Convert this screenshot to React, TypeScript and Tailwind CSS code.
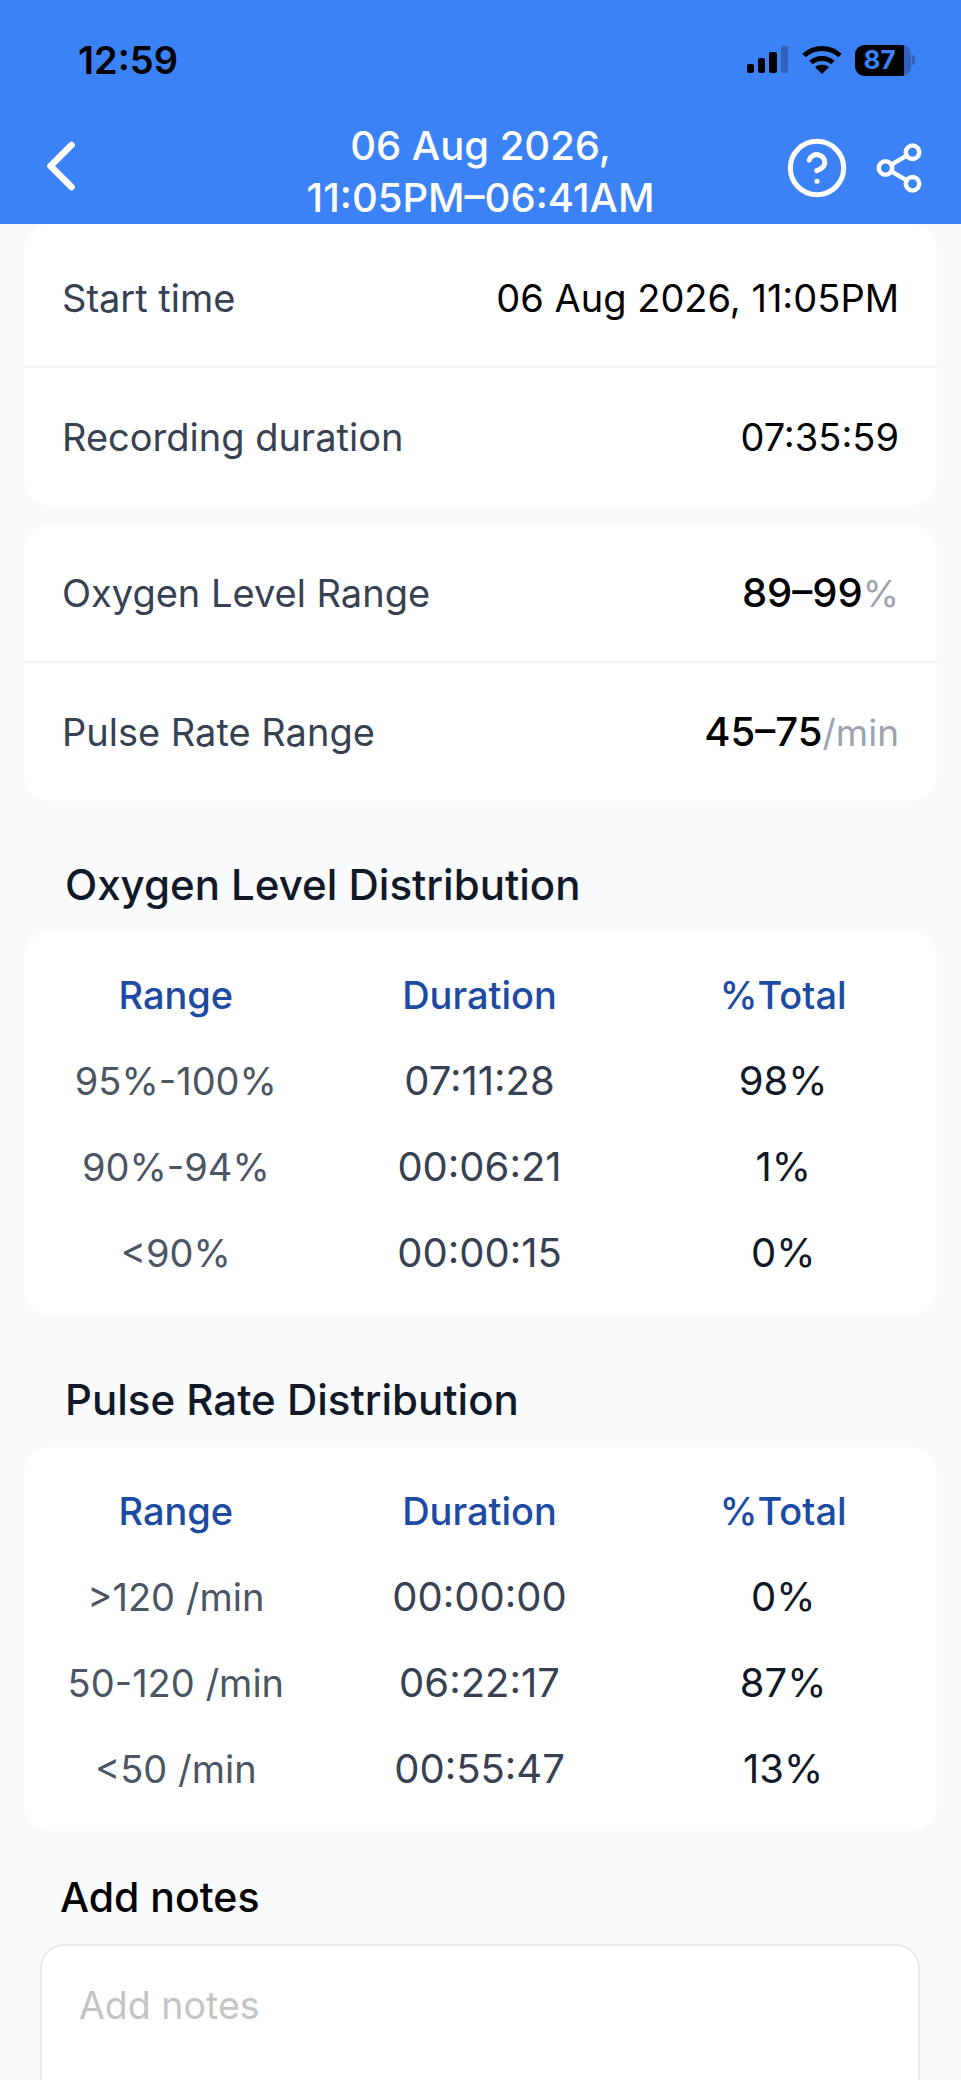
import { ChevronLeft, CircleHelp, Share2 } from 'lucide-react';

const oxygenRows = [
  ['95%-100%', '07:11:28', '98%'],
  ['90%-94%', '00:06:21', '1%'],
  ['<90%', '00:00:15', '0%'],
];

const pulseRows = [
  ['>120 /min', '00:00:00', '0%'],
  ['50-120 /min', '06:22:17', '87%'],
  ['<50 /min', '00:55:47', '13%'],
];

function StatusIcons() {
  return (
    <div className="flex items-center">
      <svg width="44" height="28" viewBox="0 0 44 28" fill="#000">
        <rect x="1" y="18" width="7" height="9" rx="2" />
        <rect x="12" y="12" width="7" height="15" rx="2" />
        <rect x="23" y="6" width="8" height="21" rx="2" />
        <rect x="35" y="0" width="7" height="27" rx="2" fill="#2f62b8" />
      </svg>
      <svg className="ml-[11px]" width="42" height="30" viewBox="0 0 42 30" fill="none" stroke="#000" strokeWidth="5">
        <path d="M3 10.5C13 1 29 1 39 10.5" />
        <path d="M10 17.5C16 12 26 12 32 17.5" />
        <path d="M21 29l-7-7c4-3 10-3 14 0z" fill="#000" stroke="none" />
      </svg>
      <div className="ml-[12px] flex items-center">
        <div className="flex h-[31px] w-[56px] overflow-hidden rounded-[9px] bg-[#2f62b8]">
          <div className="flex w-[49px] items-center justify-center rounded-l-[9px] bg-black text-[26px] font-bold leading-none text-[#3b82f6]">
            87
          </div>
        </div>
        <div className="ml-[1px] h-[10px] w-[3px] rounded-r-full bg-[#2f62b8]" />
      </div>
    </div>
  );
}

function InfoRow({ label, children, divider }: { label: string; children: React.ReactNode; divider?: boolean }) {
  return (
    <div className={`flex h-[138px] items-center justify-between px-[38px] ${divider ? 'border-b-2 border-[#f3f4f6]' : ''}`}>
      <span className="text-[#374151]">{label}</span>
      <span className="text-black">{children}</span>
    </div>
  );
}

function DistributionTable({ rows }: { rows: string[][] }) {
  return (
    <div className="rounded-[26px] bg-white pt-[21px] pb-[19px] pr-[2px] text-center text-[40px]">
      <div className="grid h-[86px] grid-cols-3 items-center font-[450] text-[#1d4ba3]">
        <span className="text-[38px]">Range</span>
        <span className="text-[38px]">Duration</span>
        <span className="text-[38px]">%Total</span>
      </div>
      {rows.map(row => (
        <div key={row[0]} className="grid h-[86px] grid-cols-3 items-center">
          <span className="text-[38px] text-[#4b5563]">{row[0]}</span>
          <span className="text-[#374151]">{row[1]}</span>
          <span className="text-[#111827]">{row[2]}</span>
        </div>
      ))}
    </div>
  );
}

export default function App() {
  return (
    <div className="h-[2080px] w-[961px] overflow-hidden bg-[#f9fafb] font-['Inter',sans-serif] text-[38px] leading-none">
      <header className="h-[224px] bg-[#3b82f6]">
        <div className="flex h-[120px] items-center justify-between pl-[78px] pr-[46px]">
          <span className="text-[38px] font-semibold text-black">12:59</span>
          <StatusIcons />
        </div>
        <div className="grid h-[104px] grid-cols-[1fr_auto_1fr] items-start text-white">
          <div className="pl-[19px] pt-[4px]">
            <ChevronLeft size={84} strokeWidth={1.9} />
          </div>
          <div className="text-center text-[40px] font-[450] leading-[52px]">
            06 Aug 2026,
            <br />
            11:05PM–06:41AM
          </div>
          <div className="flex justify-end pr-[35px] pt-[16px]">
            <CircleHelp size={64} strokeWidth={1.9} />
            <Share2 size={54} strokeWidth={2} className="ml-[23px] mt-[5px]" />
          </div>
        </div>
      </header>

      <main className="px-[24px]">
        <section className="rounded-[26px] bg-white pt-[6px]">
          <InfoRow label="Start time" divider>
            06 Aug 2026, 11:05PM
          </InfoRow>
          <InfoRow label="Recording duration">07:35:59</InfoRow>
        </section>

        <section className="mt-[19px] rounded-[26px] bg-white">
          <InfoRow label="Oxygen Level Range" divider>
            <span className="text-[40px] font-[450]">89–99</span>
            <span className="text-[37px] text-[#9ca3af]">%</span>
          </InfoRow>
          <InfoRow label="Pulse Rate Range">
            <span className="text-[40px] font-[450]">45–75</span>
            <span className="text-[37px] text-[#9ca3af]">/min</span>
          </InfoRow>
        </section>

        <h2 className="mt-[63px] mb-[25px] pl-[41px] text-[42px] font-[450] text-[#111827]">Oxygen Level Distribution</h2>
        <DistributionTable rows={oxygenRows} />

        <h2 className="mt-[64px] mb-[26px] pl-[41px] text-[42px] font-[450] text-[#111827]">Pulse Rate Distribution</h2>
        <DistributionTable rows={pulseRows} />

        <h2 className="mt-[46px] pl-[36px] text-[41px] font-[450] text-black">Add notes</h2>
        <textarea
          placeholder="Add notes"
          className="mt-[26px] ml-[16px] h-[240px] w-[880px] resize-none rounded-[24px] border-2 border-[#e5e7eb] bg-white px-[37px] py-[41px] text-[37.5px] leading-none placeholder:text-[#c4c4c4]"
        />
      </main>
    </div>
  );
}
